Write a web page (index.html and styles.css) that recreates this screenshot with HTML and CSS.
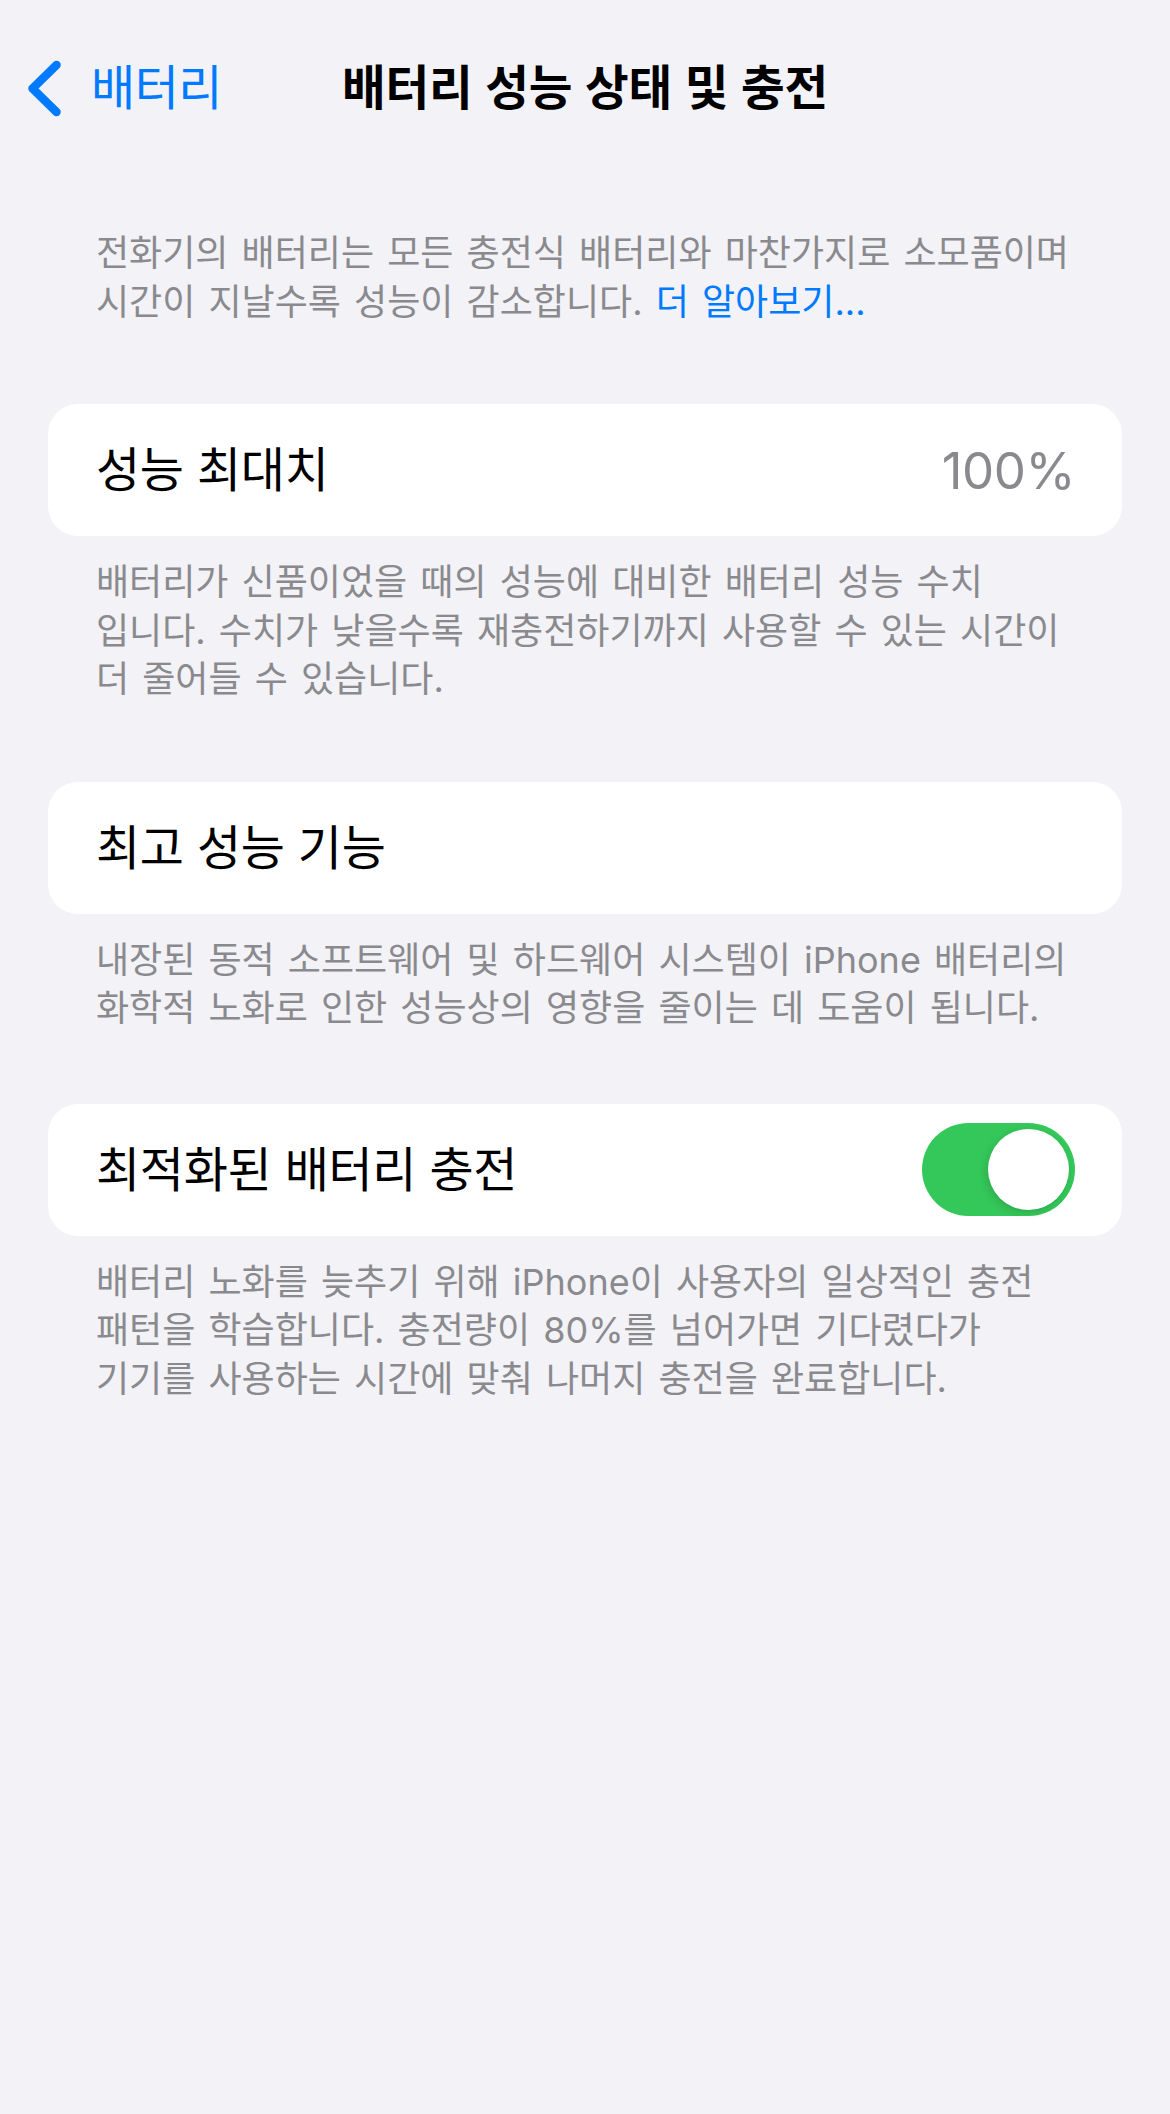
FILE: index.html
```html
<!DOCTYPE html>
<html lang="ko">
<head>
<meta charset="utf-8">
<title>배터리 성능 상태 및 충전</title>
<link rel="stylesheet" href="styles.css">
</head>
<body>
<div class="screen">
  <header class="nav">
    <a class="back" href="#">
      <svg class="chevron" viewBox="0 0 34 57" width="34" height="57" aria-hidden="true">
        <path d="M29.5 5 L5.5 28.5 L29.5 52" fill="none" stroke="#007AFF" stroke-width="8.5" stroke-linecap="round" stroke-linejoin="round"/>
      </svg>
      <span class="back-label">배터리</span>
    </a>
    <h1 class="title">배터리 성능 상태 및 충전</h1>
    <div class="nav-spacer"></div>
  </header>

  <main class="content">
    <p class="footer footer-intro">전화기의 배터리는 모든 충전식 배터리와 마찬가지로 소모품이며<br>시간이 지날수록 성능이 감소합니다. <a class="link" href="#">더 알아보기...</a></p>

    <section class="group">
      <div class="card">
        <span class="row-label">성능 최대치</span>
        <span class="row-value">100%</span>
      </div>
      <p class="footer">배터리가 신품이었을 때의 성능에 대비한 배터리 성능 수치<br>입니다. 수치가 낮을수록 재충전하기까지 사용할 수 있는 시간이<br>더 줄어들 수 있습니다.</p>
    </section>

    <section class="group">
      <div class="card">
        <span class="row-label">최고 성능 기능</span>
      </div>
      <p class="footer">내장된 동적 소프트웨어 및 하드웨어 시스템이 iPhone 배터리의<br>화학적 노화로 인한 성능상의 영향을 줄이는 데 도움이 됩니다.</p>
    </section>

    <section class="group group-tight">
      <div class="card">
        <span class="row-label">최적화된 배터리 충전</span>
        <span class="switch on"><span class="knob"></span></span>
      </div>
      <p class="footer">배터리 노화를 늦추기 위해 iPhone이 사용자의 일상적인 충전<br>패턴을 학습합니다. 충전량이 80%를 넘어가면 기다렸다가<br>기기를 사용하는 시간에 맞춰 나머지 충전을 완료합니다.</p>
    </section>
  </main>
</div>
</body>
</html>
```

FILE: styles.css
```css
html, body {
  margin: 0;
  padding: 0;
  background: #F2F2F7;
}

body {
  font-family: "Inter", "Noto Sans CJK KR", "Noto Sans", sans-serif;
  color: #000;
  -webkit-font-smoothing: antialiased;
}

.screen {
  width: 1170px;
  min-height: 2114px;
  background: #F2F2F7;
}

.nav {
  height: 176px;
  display: grid;
  grid-template-columns: 1fr auto 1fr;
  align-items: center;
}

.back {
  display: flex;
  align-items: center;
  gap: 30px;
  padding-left: 27px;
  text-decoration: none;
  color: #007AFF;
}

.chevron {
  display: block;
  flex: none;
}

.back-label {
  font-size: 48px;
  font-weight: 400;
  line-height: 1;
  letter-spacing: -0.5px;
}

.title {
  margin: 0;
  font-size: 47.5px;
  font-weight: 700;
  line-height: 1;
  word-spacing: 2px;
  letter-spacing: -0.3px;
}

.content {
  padding: 0 48px;
  display: flex;
  flex-direction: column;
}

.footer {
  margin: 0;
  padding: 0 0 0 48px;
  font-size: 36px;
  line-height: 48.5px;
  color: #8A8A8E;
  white-space: nowrap;
  word-spacing: 3px;
}

.footer-intro {
  margin-top: 53px;
}

.link {
  color: #007AFF;
  text-decoration: none;
}

.group {
  margin-top: 78px;
  display: flex;
  flex-direction: column;
  gap: 22px;
}

.group-tight {
  margin-top: 71px;
}

.card {
  height: 132px;
  background: #FFFFFF;
  border-radius: 30px;
  display: flex;
  align-items: center;
  justify-content: space-between;
  padding: 0 47px 0 48px;
}

.row-label {
  font-size: 48px;
  line-height: 1;
  letter-spacing: -0.3px;
}

.row-value {
  font-family: "Inter", sans-serif;
  font-size: 51px;
  line-height: 1;
  color: #8A8A8E;
  letter-spacing: -0.5px;
}

.switch {
  width: 153px;
  height: 93px;
  border-radius: 47px;
  background: #34C759;
  display: flex;
  align-items: center;
  justify-content: flex-end;
  padding: 0 6px;
  box-sizing: border-box;
}

.knob {
  width: 81px;
  height: 81px;
  border-radius: 50%;
  background: #FFFFFF;
  box-shadow: -2px 3px 8px rgba(0, 0, 0, 0.12), 0 1px 2px rgba(0, 0, 0, 0.06);
}
```
